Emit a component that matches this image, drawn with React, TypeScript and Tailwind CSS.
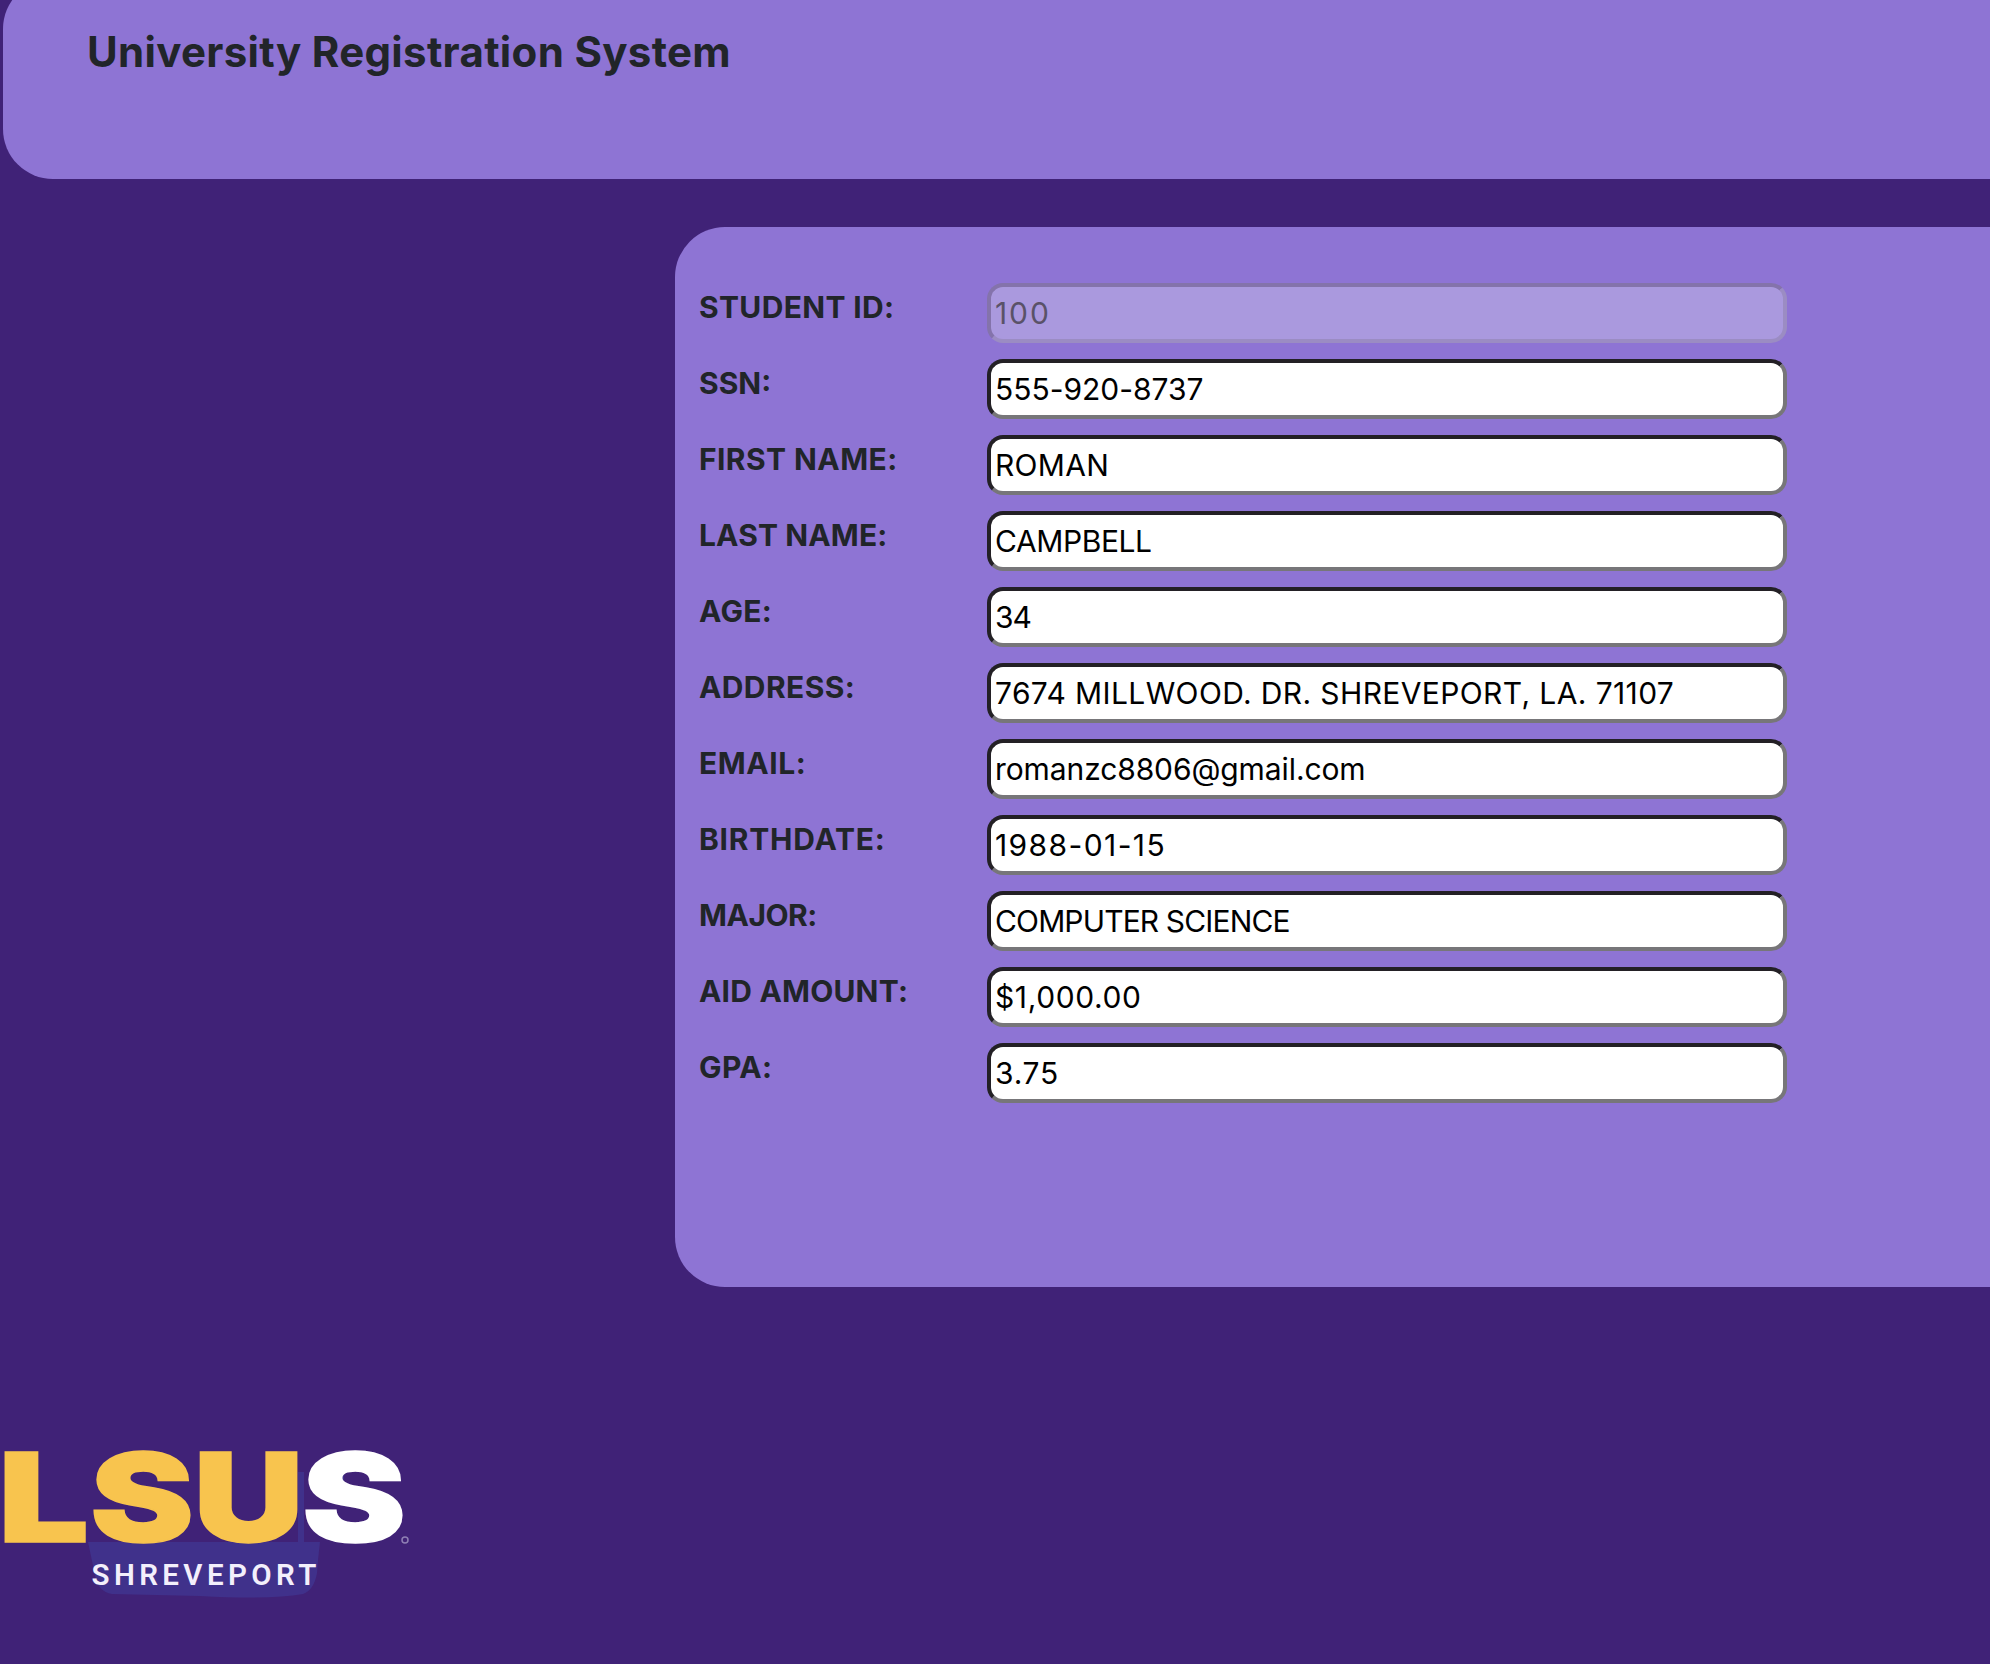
import React from "react";

type Field = {
  label: string;
  value: string;
  labelClass: string;
  valueClass: string;
  disabled?: boolean;
};

const fields: Field[] = [
  { label: "STUDENT ID:", value: "100", labelClass: "tracking-[0.35px]", valueClass: "tracking-[1.9px]", disabled: true },
  { label: "SSN:", value: "555-920-8737", labelClass: "tracking-[0px]", valueClass: "tracking-[-0.02px]" },
  { label: "FIRST NAME:", value: "ROMAN", labelClass: "tracking-[0.42px]", valueClass: "tracking-[0.3px]" },
  { label: "LAST NAME:", value: "CAMPBELL", labelClass: "tracking-[0.13px]", valueClass: "tracking-[-0.4px]" },
  { label: "AGE:", value: "34", labelClass: "tracking-[0.3px]", valueClass: "tracking-[-1px]" },
  { label: "ADDRESS:", value: "7674 MILLWOOD. DR. SHREVEPORT, LA. 71107", labelClass: "tracking-[0.4px]", valueClass: "tracking-[0.38px]" },
  { label: "EMAIL:", value: "romanzc8806@gmail.com", labelClass: "tracking-[0.56px]", valueClass: "tracking-[-0.1px]" },
  { label: "BIRTHDATE:", value: "1988-01-15", labelClass: "tracking-[0.77px]", valueClass: "tracking-[1.4px]" },
  { label: "MAJOR:", value: "COMPUTER SCIENCE", labelClass: "tracking-[-0.48px]", valueClass: "tracking-[-0.86px]" },
  { label: "AID AMOUNT:", value: "$1,000.00", labelClass: "tracking-[0.2px]", valueClass: "tracking-[0.6px]" },
  { label: "GPA:", value: "3.75", labelClass: "tracking-[0.4px]", valueClass: "tracking-[0.77px]" },
];

function FieldRow({ field }: { field: Field }) {
  const tone = field.disabled
    ? "bg-[#aa99de] text-[#5a5268] border-t-[#8473ab] border-l-[#8473ab] border-r-[#9b8cc3] border-b-[#9b8cc3]"
    : "bg-white text-black border-t-[#232025] border-l-[#232025] border-r-[#777679] border-b-[#777679]";
  return (
    <div className="flex h-[60px]">
      <label className={`w-[288px] shrink-0 whitespace-nowrap pt-1 text-[30px] leading-[40px] font-bold text-[#212529] ${field.labelClass}`}>
        {field.label}
      </label>
      <input
        type="text"
        defaultValue={field.value}
        disabled={field.disabled}
        className={`h-[60px] w-[800px] rounded-2xl border-4 pl-[4px] text-[30px] leading-[36px] ${tone} ${field.valueClass}`}
      />
    </div>
  );
}

function Logo() {
  return (
    <svg width="430" height="230" viewBox="0 -40 430 230" className="block" aria-label="LSUS Shreveport">
      <path
        d="M88 112H320Q318 128 317 143Q314 160 303 164Q270 170 200 166L112 164Q98 162 95 145Z M298 42H304V112H298Z M338 42H344V58H338Z"
        fill="#40318b"
      />
      <g fontFamily="Inter" fontWeight="900" fontSize="124" strokeWidth="1.5" fill="#f8c44e" stroke="#f8c44e">
        <text transform="translate(-2 112) scale(1.3 1)">L</text>
        <text transform="translate(90 111.5) scale(1.26 1)">S</text>
        <text transform="translate(193.5 111.5) scale(1.23 1)">U</text>
        <text transform="translate(302 111.5) scale(1.26 1)" fill="#ffffff" stroke="#ffffff">S</text>
      </g>
      <circle cx="405" cy="110" r="3" fill="none" stroke="#8f7fb4" strokeWidth="1.5" />
      <text x="91.5" y="155" fontFamily="Roboto" fontWeight="600" fontSize="29.5" letterSpacing="4.4" fill="#f3effb">
        SHREVEPORT
      </text>
    </svg>
  );
}

export default function App() {
  return (
    <div className="flex h-[1664px] w-[1990px] flex-col overflow-hidden bg-[#402277] font-['Inter',sans-serif]">
      <header className="-mt-[21px] ml-[3px] h-[200px] shrink-0 rounded-l-[50px] bg-[#8e74d4] pt-[41px] pl-[84px]">
        <h1 className="text-[42px] leading-[64px] font-bold tracking-[0.32px] text-[#212529]">
          University Registration System
        </h1>
      </header>
      <main className="mt-12 ml-[675px] flex h-[1060px] shrink-0 flex-col gap-4 rounded-l-[50px] bg-[#8e74d4] pt-14 pl-6">
        {fields.map((f) => (
          <FieldRow key={f.label} field={f} />
        ))}
      </main>
      <footer className="mt-[103px]">
        <Logo />
      </footer>
    </div>
  );
}
